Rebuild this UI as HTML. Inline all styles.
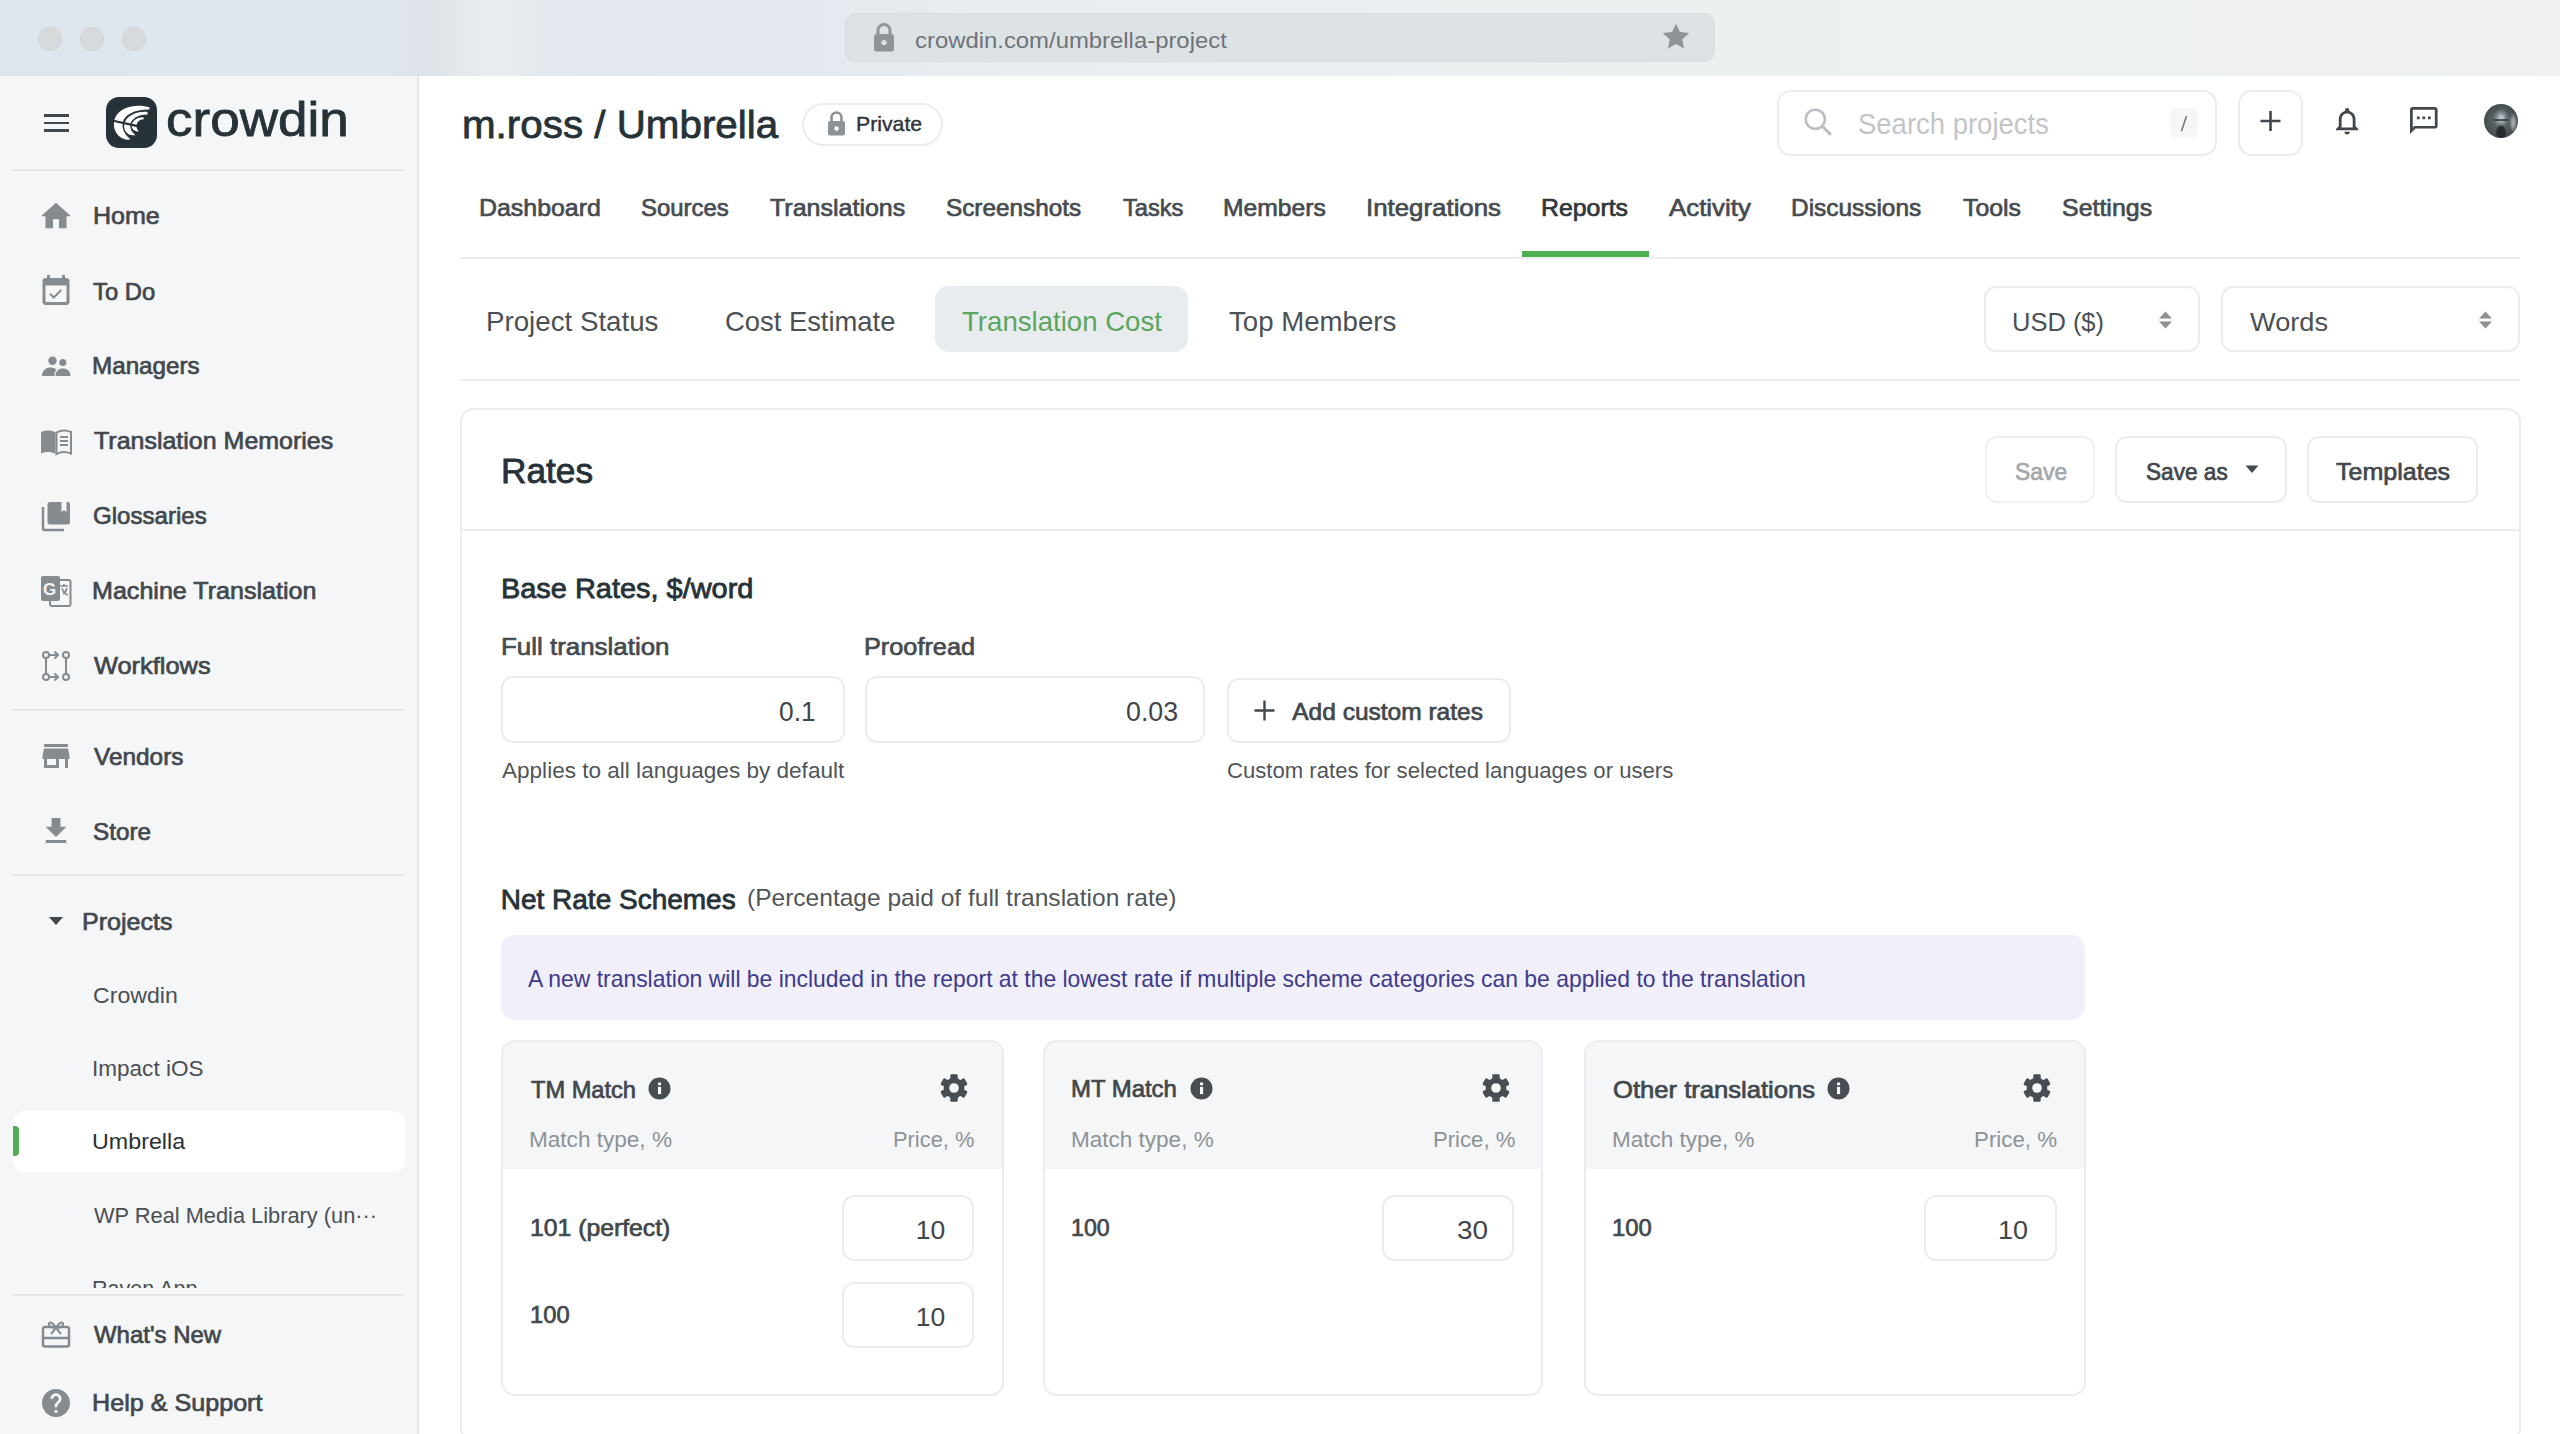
<!DOCTYPE html>
<html><head><meta charset="utf-8">
<style>
html,body{margin:0;padding:0;width:2560px;height:1434px;overflow:hidden;background:#fff;font-family:"Liberation Sans",sans-serif;}
.a{position:absolute;box-sizing:border-box;}
.t{position:absolute;line-height:1;white-space:nowrap;transform-origin:0 0;}
svg{position:absolute;overflow:visible;}
.sep{position:absolute;height:2px;background:#eceef0;}
.bx{position:absolute;box-sizing:border-box;border:2px solid #eaecee;background:#fff;}
</style></head>
<body>
<!-- browser top bar -->
<div class="a" style="left:0;top:0;width:2560px;height:76px;background:linear-gradient(90deg,#dfe5ec 0px,#e1e7ee 380px,#dde3e8 425px,#e9edef 490px,#e2e8ee 560px,#e3e9ef 800px,#e9edf0 1000px,#edf0f1 1600px,#eff1f2 2560px);"></div>
<div class="a" style="left:38px;top:27px;width:24px;height:24px;border-radius:50%;background:#d7dadd;border:1px solid #cfd3d7;"></div>
<div class="a" style="left:80px;top:27px;width:24px;height:24px;border-radius:50%;background:#d7dadd;border:1px solid #cfd3d7;"></div>
<div class="a" style="left:122px;top:27px;width:24px;height:24px;border-radius:50%;background:#d7dadd;border:1px solid #cfd3d7;"></div>
<div class="a" style="left:846px;top:14px;width:868px;height:47px;border-radius:10px;background:#dde2e5;box-shadow:0 0 0 1px #d9dee2;"></div>
<!-- url lock -->
<svg style="left:873px;top:23px" width="22" height="29" viewBox="0 0 22 29"><path d="M5 11V7.5a6 6 0 0 1 12 0V11" fill="none" stroke="#8f9499" stroke-width="3"/><rect x="1" y="11" width="20" height="17.5" rx="2.5" fill="#8f9499"/><circle cx="11" cy="19.5" r="2.6" fill="#dce1e5"/></svg>
<!-- star -->
<svg style="left:1662px;top:23px" width="28" height="27" viewBox="0 0 24 23"><path d="M12 0.5l3.4 7.2 7.9 0.9-5.9 5.4 1.6 7.8L12 17.9l-7 3.9 1.6-7.8L0.7 8.6l7.9-0.9z" fill="#8f9499"/></svg>

<!-- sidebar -->
<div class="a" style="left:0;top:76px;width:419px;height:1358px;background:#f4f6f8;border-right:2px solid #e5e7e9;"></div>
<!-- hamburger -->
<div class="a" style="left:44px;top:114px;width:25px;height:2.5px;background:#42474c;"></div>
<div class="a" style="left:44px;top:121.5px;width:25px;height:2.5px;background:#42474c;"></div>
<div class="a" style="left:44px;top:129px;width:25px;height:2.5px;background:#42474c;"></div>
<!-- logo -->
<div class="a" style="left:106px;top:97px;width:51px;height:51px;border-radius:13px;background:#263238;"></div>
<svg style="left:106px;top:97px" width="51" height="51" viewBox="0 0 51 51">
 <path d="M43.5 10.3 C31 6.5 15 9.5 9.5 20 C5.5 28 9 39 18 42 C20 42.8 22.5 43 24.5 42.3 C19 38 15.5 32 16.8 25.5 C18.5 18 28 12.5 43.5 12.6Z" fill="#fff"/>
 <path d="M41.5 15 C31 14 21.5 18.5 18.8 25.5 C16.5 32 20.5 39.5 29.5 38.2 C25 34.5 23.3 30 24.8 25.8 C26.8 20.5 33.5 17.3 41.5 17.4Z" fill="#fff"/>
 <path d="M37.6 20.3 C31.5 20 26.8 23.5 25.8 27.8 C25 31.5 28 34.5 32.8 34.6 C30.5 32 30 29 31 26.5 C32.3 23.5 35 22.2 37.6 22.2Z" fill="#fff"/>
 <path d="M6 23.5 L34 29.6" stroke="#263238" stroke-width="2.2"/>
</svg>
<div class="sep" style="left:12px;top:169px;width:392px;background:#e4e7ea;"></div>
<div class="sep" style="left:12px;top:709px;width:392px;background:#e4e7ea;"></div>
<div class="sep" style="left:12px;top:874px;width:392px;background:#e4e7ea;"></div>
<div class="sep" style="left:12px;top:1294px;width:392px;background:#e4e7ea;"></div>
<!-- sidebar icons -->
<svg style="left:41px;top:202px" width="30" height="27" viewBox="2 3 20 17"><path d="M10 20v-6h4v6h5v-8h3L12 3 2 12h3v8z" fill="#868b90"/></svg>
<svg style="left:42px;top:275px" width="28" height="30" viewBox="3 1 18 20"><path d="M19 3h-1V1h-2v2H8V1H6v2H5c-1.11 0-2 .9-2 2v14c0 1.1.89 2 2 2h14c1.1 0 2-.9 2-2V5c0-1.1-.9-2-2-2zm0 16H5V8h14v11z" fill="#868b90"/><path d="M8 13.5l2.5 2.5 5-5" fill="none" stroke="#868b90" stroke-width="1.3"/></svg>
<svg style="left:41px;top:355px" width="30" height="22" viewBox="0 0 30 22"><circle cx="11.5" cy="5.8" r="4.2" fill="#868b90"/><circle cx="21.8" cy="7.5" r="3.5" fill="#868b90"/><path d="M1 21 C1 15 5.5 12.5 9.5 12.5 C12.5 12.5 14.5 13.5 15.5 14.5 C14 16 13.5 18.5 13.5 21Z" fill="#868b90"/><path d="M14.5 21 C14.5 16 17.5 13.5 21.8 13.5 C26 13.5 29.5 16 29.5 21Z" fill="#868b90"/></svg>
<svg style="left:40px;top:429px" width="32" height="26" viewBox="0 0 32 26"><path d="M1 3 C6 1 11 1 15.5 3.5 V25 C11 22.5 6 22.5 1 24.5Z" fill="#868b90"/><path d="M16.5 3.5 C21 1 26 1 31 3 V24.5 C26 22.5 21 22.5 16.5 25Z" fill="none" stroke="#868b90" stroke-width="2"/><path d="M20 8h8M20 12h8M20 16h8" stroke="#868b90" stroke-width="1.8"/></svg>
<svg style="left:41px;top:501px" width="30" height="30" viewBox="0 0 30 30"><path d="M2 6v21.5a1.5 1.5 0 0 0 1.5 1.5H23" fill="none" stroke="#868b90" stroke-width="2.5"/><rect x="6.5" y="1" width="22.5" height="22.5" rx="2.5" fill="#868b90"/><path d="M20.5 1v10l2.5-2 2.5 2V1z" fill="#f4f6f8"/></svg>
<svg style="left:40px;top:575px" width="32" height="32" viewBox="0 0 32 32"><rect x="10" y="5" width="20.5" height="26" rx="2" fill="#f4f6f8" stroke="#868b90" stroke-width="2"/><rect x="1" y="1" width="19" height="25" rx="2" fill="#868b90"/><text x="3" y="20" font-family="Liberation Sans" font-weight="bold" font-size="17" fill="#f4f6f8">G</text><path d="M20 11h8M24 9v2M22 13c1 4 3 6 6 7M27 13c-1 3-2 5-4 6" stroke="#868b90" stroke-width="1.6" fill="none"/></svg>
<svg style="left:41px;top:650px" width="30" height="32" viewBox="0 0 30 32"><circle cx="5" cy="5" r="3" fill="none" stroke="#868b90" stroke-width="2"/><circle cx="25" cy="5" r="3" fill="none" stroke="#868b90" stroke-width="2"/><circle cx="5" cy="27" r="3" fill="none" stroke="#868b90" stroke-width="2"/><circle cx="25" cy="27" r="3" fill="none" stroke="#868b90" stroke-width="2"/><path d="M5 8v16M25 8v16M8 5h9M8 27h9" stroke="#868b90" stroke-width="2"/><path d="M13.5 1.5l3.5 3.5-3.5 3.5M13.5 23.5l3.5 3.5-3.5 3.5" fill="none" stroke="#868b90" stroke-width="2"/></svg>
<svg style="left:42px;top:744px" width="28" height="24" viewBox="3 4 18 16"><path d="M20 4H4v2h16V4zm1 10v-2l-1-5H4l-1 5v2h1v6h10v-6h4v6h2v-6h1zm-9 4H6v-4h6v4z" fill="#868b90"/></svg>
<svg style="left:45px;top:818px" width="22" height="25" viewBox="5 3 14 17"><path d="M19 9h-4V3H9v6H5l7 7 7-7zM5 18v2h14v-2H5z" fill="#868b90"/></svg>
<!-- projects caret -->
<svg style="left:49px;top:917px" width="14" height="9" viewBox="0 0 14 9"><path d="M0 0h14L7 8z" fill="#42474c"/></svg>
<!-- umbrella highlight -->
<div class="a" style="left:13px;top:1111px;width:392px;height:61px;border-radius:12px;background:#fff;"></div>
<div class="a" style="left:13px;top:1126px;width:6px;height:30px;border-radius:0 4px 4px 0;background:#52ab56;"></div>
<!-- raven clipped -->
<div class="a" style="left:0;top:1250px;width:418px;height:38px;overflow:hidden;"><div style="position:absolute;left:0;top:-1250px;width:418px;height:1434px;"><div class="t" style="left:92.31px;top:1277.20px;font-size:22.8px;color:#4a4f54;transform:scaleX(0.9464);">Raven App</div></div></div>
<svg style="left:41px;top:1320px" width="30" height="28" viewBox="0 0 30 28"><rect x="2" y="7" width="26" height="19.5" rx="2" fill="none" stroke="#868b90" stroke-width="2.5"/><path d="M2 18h26" stroke="#868b90" stroke-width="2.5"/><path d="M15 8 C12 2 7 1 8 5 C9 7 12 8 15 8 C18 8 21 7 22 5 C23 1 18 2 15 8 L10 14 M15 8 L20 14" fill="none" stroke="#868b90" stroke-width="2"/></svg>
<svg style="left:42px;top:1389px" width="28" height="28" viewBox="2 2 20 20"><path d="M12 2C6.48 2 2 6.48 2 12s4.48 10 10 10 10-4.48 10-10S17.52 2 12 2zm1 17h-2v-2h2v2zm2.07-7.75l-.9.92C13.45 12.9 13 13.5 13 15h-2v-.5c0-1.1.45-2.1 1.17-2.83l1.24-1.26c.37-.36.59-.86.59-1.41 0-1.1-.9-2-2-2s-2 .9-2 2H8c0-2.21 1.79-4 4-4s4 1.79 4 4c0 .88-.36 1.68-.93 2.25z" fill="#868b90"/></svg>

<!-- header -->
<div class="a" style="left:802px;top:103px;width:141px;height:43px;border-radius:22px;border:2px solid #eaeced;"></div>
<svg style="left:827px;top:111px" width="19" height="25" viewBox="0 0 19 25"><path d="M4.5 10V6.5a5 5 0 0 1 10 0V10" fill="none" stroke="#8d9297" stroke-width="2.6"/><rect x="1" y="10" width="17" height="14.5" rx="2" fill="#8d9297"/><circle cx="9.5" cy="17.5" r="2.2" fill="#fff"/></svg>
<!-- search -->
<div class="a" style="left:1777px;top:90px;width:440px;height:66px;border-radius:14px;border:2px solid #eaeced;"></div>
<svg style="left:1804px;top:108px" width="28" height="28" viewBox="0 0 28 28"><circle cx="11.3" cy="11.3" r="9.6" fill="none" stroke="#bbbfc2" stroke-width="2.6"/><path d="M18.3 18.3L26.8 26.8" stroke="#bbbfc2" stroke-width="3"/></svg>
<div class="a" style="left:2170px;top:108px;width:28px;height:30px;border-radius:6px;background:#f5f6f7;"></div>
<svg style="left:2180px;top:115px" width="8" height="17" viewBox="0 0 8 17"><path d="M6.5 1L1.5 16" stroke="#6b7075" stroke-width="1.5"/></svg>
<div class="a" style="left:2238px;top:90px;width:65px;height:66px;border-radius:14px;border:2px solid #eaeced;"></div>
<svg style="left:2260px;top:111px" width="21" height="20" viewBox="0 0 21 20"><path d="M10.5 0v20M0.5 10h20" stroke="#42474c" stroke-width="2.6"/></svg>
<svg style="left:2336px;top:108px" width="22.3" height="26.4" viewBox="4 2.5 16 19.5" preserveAspectRatio="none"><path d="M12 22c1.1 0 2-.9 2-2h-4c0 1.1.9 2 2 2zm6-6v-5c0-3.07-1.63-5.64-4.5-6.32V4c0-.83-.67-1.5-1.5-1.5s-1.5.67-1.5 1.5v.68C7.64 5.36 6 7.92 6 11v5l-2 2v1h16v-1l-2-2zm-2 1H8v-6c0-2.48 1.51-4.5 4-4.5s4 2.02 4 4.5v6z" fill="#42474c"/></svg>
<svg style="left:2410px;top:107px" width="27.6" height="27" viewBox="2 2 20 20" preserveAspectRatio="none"><path d="M20 2H4c-1.1 0-1.99.9-1.99 2L2 22l4-4h14c1.1 0 2-.9 2-2V4c0-1.1-.9-2-2-2zm0 14H5.17L4 17.17V4h16v12zM7 9h2v2H7zm4 0h2v2h-2zm4 0h2v2h-2z" fill="#42474c"/></svg>
<div class="a" style="left:2484px;top:104px;width:34px;height:34px;border-radius:50%;overflow:hidden;background:radial-gradient(ellipse 6px 9px at 50% 85%,#242a2d 60%,rgba(36,42,45,0) 100%),radial-gradient(ellipse 8px 10px at 50% 42%,#c3cace 15%,rgba(140,148,154,.7) 60%,rgba(90,98,103,0) 100%),radial-gradient(ellipse 4px 10px at 86% 55%,#9ea5a9 30%,rgba(158,165,169,0) 100%),radial-gradient(circle at 50% 50%,#6a7175 0%,#4b5255 60%,#33393c 100%);">
<div style="position:absolute;left:10px;top:15px;width:14px;height:2px;background:#2c3134;opacity:.8;"></div>
</div>

<!-- nav line + underline -->
<div class="sep" style="left:460px;top:257px;width:2060px;"></div>
<div class="a" style="left:1522px;top:251px;width:127px;height:6px;background:#4caf50;"></div>
<div class="a" style="left:935px;top:286px;width:253px;height:66px;border-radius:14px;background:#e9ecee;"></div>
<div class="sep" style="left:460px;top:379px;width:2060px;"></div>
<!-- selects -->
<div class="bx" style="left:1984px;top:286px;width:216px;height:66px;border-radius:12px;"></div>
<svg style="left:2158px;top:311px" width="15" height="18" viewBox="0 0 15 18"><path d="M1 7.5h13L7.5 0.5zM1 10.5h13L7.5 17.5z" fill="#8a8f93"/></svg>
<div class="bx" style="left:2221px;top:286px;width:299px;height:66px;border-radius:12px;"></div>
<svg style="left:2478px;top:311px" width="15" height="18" viewBox="0 0 15 18"><path d="M1 7.5h13L7.5 0.5zM1 10.5h13L7.5 17.5z" fill="#8a8f93"/></svg>

<!-- rates card -->
<div class="bx" style="left:460px;top:408px;width:2061px;height:1034px;border-radius:14px;"></div>
<div class="sep" style="left:461px;top:529px;width:2058px;"></div>
<div class="bx" style="left:1985px;top:436px;width:110px;height:67px;border-radius:12px;border-color:#eef0f1;"></div>
<div class="bx" style="left:2115px;top:436px;width:172px;height:67px;border-radius:12px;"></div>
<svg style="left:2245px;top:465px" width="14" height="9" viewBox="0 0 14 9"><path d="M0.5 0.5h13L7 8z" fill="#42474c"/></svg>
<div class="bx" style="left:2307px;top:436px;width:171px;height:67px;border-radius:12px;"></div>
<!-- inputs -->
<div class="bx" style="left:501px;top:676px;width:344px;height:67px;border-radius:12px;"></div>
<div class="bx" style="left:865px;top:676px;width:340px;height:67px;border-radius:12px;"></div>
<div class="bx" style="left:1227px;top:678px;width:284px;height:65px;border-radius:12px;"></div>
<svg style="left:1254px;top:700px" width="21" height="21" viewBox="0 0 21 21"><path d="M10.5 0.5v20M0.5 10.5h20" stroke="#42474c" stroke-width="2.4"/></svg>
<!-- alert -->
<div class="a" style="left:501px;top:935px;width:1584px;height:85px;border-radius:14px;background:#f0effa;"></div>
<!-- scheme cards -->
<div class="bx" style="left:501px;top:1040px;width:503px;height:356px;border-radius:14px;overflow:hidden;"><div style="position:absolute;left:0;top:0;right:0;height:127px;background:#f4f6f7;"></div></div>
<div class="bx" style="left:1043px;top:1040px;width:500px;height:356px;border-radius:14px;overflow:hidden;"><div style="position:absolute;left:0;top:0;right:0;height:127px;background:#f4f6f7;"></div></div>
<div class="bx" style="left:1584px;top:1040px;width:502px;height:356px;border-radius:14px;overflow:hidden;"><div style="position:absolute;left:0;top:0;right:0;height:127px;background:#f4f6f7;"></div></div>
<!-- info icons -->
<svg style="left:648px;top:1077px" width="23" height="23" viewBox="0 0 23 23"><circle cx="11.5" cy="11.5" r="11" fill="#474d52"/><rect x="10" y="9.8" width="3.1" height="7.3" fill="#fff"/><rect x="10" y="5.6" width="3.1" height="2.6" rx="0.6" fill="#fff"/></svg>
<svg style="left:1190px;top:1077px" width="23" height="23" viewBox="0 0 23 23"><circle cx="11.5" cy="11.5" r="11" fill="#474d52"/><rect x="10" y="9.8" width="3.1" height="7.3" fill="#fff"/><rect x="10" y="5.6" width="3.1" height="2.6" rx="0.6" fill="#fff"/></svg>
<svg style="left:1827px;top:1077px" width="23" height="23" viewBox="0 0 23 23"><circle cx="11.5" cy="11.5" r="11" fill="#474d52"/><rect x="10" y="9.8" width="3.1" height="7.3" fill="#fff"/><rect x="10" y="5.6" width="3.1" height="2.6" rx="0.6" fill="#fff"/></svg>
<!-- gears -->
<svg style="left:940px;top:1074px" width="28" height="28" viewBox="0 0 28 28"><g fill="#474d52"><circle cx="14" cy="14" r="10.3"/><g id="tp"><rect x="10.3" y="0.2" width="7.4" height="8" rx="1.3"/><rect x="10.3" y="19.8" width="7.4" height="8" rx="1.3"/></g><g transform="rotate(60 14 14)"><rect x="10.3" y="0.2" width="7.4" height="8" rx="1.3"/><rect x="10.3" y="19.8" width="7.4" height="8" rx="1.3"/></g><g transform="rotate(120 14 14)"><rect x="10.3" y="0.2" width="7.4" height="8" rx="1.3"/><rect x="10.3" y="19.8" width="7.4" height="8" rx="1.3"/></g></g><circle cx="14" cy="14" r="4.8" fill="#f4f6f7"/></svg>
<svg style="left:1482px;top:1074px" width="28" height="28" viewBox="0 0 28 28"><g fill="#474d52"><circle cx="14" cy="14" r="10.3"/><g id="tp"><rect x="10.3" y="0.2" width="7.4" height="8" rx="1.3"/><rect x="10.3" y="19.8" width="7.4" height="8" rx="1.3"/></g><g transform="rotate(60 14 14)"><rect x="10.3" y="0.2" width="7.4" height="8" rx="1.3"/><rect x="10.3" y="19.8" width="7.4" height="8" rx="1.3"/></g><g transform="rotate(120 14 14)"><rect x="10.3" y="0.2" width="7.4" height="8" rx="1.3"/><rect x="10.3" y="19.8" width="7.4" height="8" rx="1.3"/></g></g><circle cx="14" cy="14" r="4.8" fill="#f4f6f7"/></svg>
<svg style="left:2023px;top:1074px" width="28" height="28" viewBox="0 0 28 28"><g fill="#474d52"><circle cx="14" cy="14" r="10.3"/><g id="tp"><rect x="10.3" y="0.2" width="7.4" height="8" rx="1.3"/><rect x="10.3" y="19.8" width="7.4" height="8" rx="1.3"/></g><g transform="rotate(60 14 14)"><rect x="10.3" y="0.2" width="7.4" height="8" rx="1.3"/><rect x="10.3" y="19.8" width="7.4" height="8" rx="1.3"/></g><g transform="rotate(120 14 14)"><rect x="10.3" y="0.2" width="7.4" height="8" rx="1.3"/><rect x="10.3" y="19.8" width="7.4" height="8" rx="1.3"/></g></g><circle cx="14" cy="14" r="4.8" fill="#f4f6f7"/></svg>
<!-- scheme inputs -->
<div class="bx" style="left:842px;top:1195px;width:132px;height:66px;border-radius:12px;"></div>
<div class="bx" style="left:842px;top:1282px;width:132px;height:66px;border-radius:12px;"></div>
<div class="bx" style="left:1382px;top:1195px;width:132px;height:66px;border-radius:12px;"></div>
<div class="bx" style="left:1924px;top:1195px;width:133px;height:66px;border-radius:12px;"></div>

<div class="t" style="left:92.79px;top:204.40px;font-size:24.5px;color:#42474c;-webkit-text-stroke:0.7px #42474c;transform:scaleX(1.0217);">Home</div>
<div class="t" style="left:93.08px;top:279.50px;font-size:24.5px;color:#42474c;-webkit-text-stroke:0.7px #42474c;transform:scaleX(0.9708);">To Do</div>
<div class="t" style="left:92.46px;top:354.40px;font-size:24.5px;color:#42474c;-webkit-text-stroke:0.7px #42474c;transform:scaleX(0.9886);">Managers</div>
<div class="t" style="left:93.71px;top:429.40px;font-size:24.5px;color:#42474c;-webkit-text-stroke:0.7px #42474c;transform:scaleX(1.0195);">Translation Memories</div>
<div class="t" style="left:92.97px;top:504.00px;font-size:24.5px;color:#42474c;-webkit-text-stroke:0.7px #42474c;transform:scaleX(0.9823);">Glossaries</div>
<div class="t" style="left:92.39px;top:579.40px;font-size:24.5px;color:#42474c;-webkit-text-stroke:0.7px #42474c;transform:scaleX(1.0238);">Machine Translation</div>
<div class="t" style="left:93.85px;top:654.00px;font-size:24.5px;color:#42474c;-webkit-text-stroke:0.7px #42474c;transform:scaleX(1.0361);">Workflows</div>
<div class="t" style="left:93.55px;top:745.00px;font-size:24.5px;color:#42474c;-webkit-text-stroke:0.7px #42474c;transform:scaleX(0.9951);">Vendors</div>
<div class="t" style="left:93.19px;top:819.70px;font-size:24.5px;color:#42474c;-webkit-text-stroke:0.7px #42474c;transform:scaleX(0.9912);">Store</div>
<div class="t" style="left:82.19px;top:909.50px;font-size:24.5px;color:#42474c;-webkit-text-stroke:0.7px #42474c;transform:scaleX(1.0231);">Projects</div>
<div class="t" style="left:93.95px;top:1322.90px;font-size:24.5px;color:#42474c;-webkit-text-stroke:0.7px #42474c;transform:scaleX(0.9783);">What's New</div>
<div class="t" style="left:91.99px;top:1391.40px;font-size:24.5px;color:#42474c;-webkit-text-stroke:0.7px #42474c;transform:scaleX(1.0260);">Help &amp; Support</div>
<div class="t" style="left:92.52px;top:984.00px;font-size:22.8px;color:#4a4f54;transform:scaleX(1.0138);">Crowdin</div>
<div class="t" style="left:91.84px;top:1056.80px;font-size:22.8px;color:#4a4f54;transform:scaleX(0.9889);">Impact iOS</div>
<div class="t" style="left:92.15px;top:1130.20px;font-size:22.8px;color:#2b3034;transform:scaleX(1.0207);">Umbrella</div>
<div class="t" style="left:93.60px;top:1203.60px;font-size:22.8px;color:#4a4f54;transform:scaleX(0.9562);">WP Real Media Library (un···</div>
<div class="t" style="left:462.28px;top:104.70px;font-size:39.7px;color:#263238;-webkit-text-stroke:0.8px #263238;transform:scaleX(1.0168);">m.ross / Umbrella</div>
<div class="t" style="left:855.94px;top:113.60px;font-size:20.6px;color:#30353a;-webkit-text-stroke:0.4px #30353a;transform:scaleX(1.0313);">Private</div>
<div class="t" style="left:915.45px;top:28.60px;font-size:22.7px;color:#6f7479;transform:scaleX(1.0523);">crowdin.com/umbrella-project</div>
<div class="t" style="left:166.44px;top:96.00px;font-size:48px;color:#263238;-webkit-text-stroke:0.8px #263238;transform:scaleX(1.1042);">crowdin</div>
<div class="t" style="left:479.40px;top:195.70px;font-size:24.5px;color:#464b50;-webkit-text-stroke:0.7px #464b50;transform:scaleX(1.0166);">Dashboard</div>
<div class="t" style="left:641.20px;top:195.70px;font-size:24.5px;color:#464b50;-webkit-text-stroke:0.7px #464b50;transform:scaleX(0.9768);">Sources</div>
<div class="t" style="left:770.46px;top:195.70px;font-size:24.5px;color:#464b50;-webkit-text-stroke:0.7px #464b50;transform:scaleX(1.0206);">Translations</div>
<div class="t" style="left:946.49px;top:195.70px;font-size:24.5px;color:#464b50;-webkit-text-stroke:0.7px #464b50;transform:scaleX(0.9922);">Screenshots</div>
<div class="t" style="left:1122.58px;top:195.70px;font-size:24.5px;color:#464b50;-webkit-text-stroke:0.7px #464b50;transform:scaleX(0.9646);">Tasks</div>
<div class="t" style="left:1223.22px;top:195.70px;font-size:24.5px;color:#464b50;-webkit-text-stroke:0.7px #464b50;transform:scaleX(1.0068);">Members</div>
<div class="t" style="left:1366.13px;top:195.70px;font-size:24.5px;color:#464b50;-webkit-text-stroke:0.7px #464b50;transform:scaleX(1.0547);">Integrations</div>
<div class="t" style="left:1540.91px;top:195.70px;font-size:24.5px;color:#30353a;-webkit-text-stroke:0.7px #30353a;transform:scaleX(1.0144);">Reports</div>
<div class="t" style="left:1669.10px;top:195.70px;font-size:24.5px;color:#464b50;-webkit-text-stroke:0.7px #464b50;transform:scaleX(1.0542);">Activity</div>
<div class="t" style="left:1791.44px;top:195.70px;font-size:24.5px;color:#464b50;-webkit-text-stroke:0.7px #464b50;transform:scaleX(0.9963);">Discussions</div>
<div class="t" style="left:1962.96px;top:195.70px;font-size:24.5px;color:#464b50;-webkit-text-stroke:0.7px #464b50;transform:scaleX(1.0135);">Tools</div>
<div class="t" style="left:2061.57px;top:195.70px;font-size:24.5px;color:#464b50;-webkit-text-stroke:0.7px #464b50;transform:scaleX(1.0179);">Settings</div>
<div class="t" style="left:486.14px;top:308.20px;font-size:28px;color:#4b5055;transform:scaleX(0.9893);">Project Status</div>
<div class="t" style="left:724.72px;top:308.20px;font-size:28px;color:#4b5055;transform:scaleX(0.9777);">Cost Estimate</div>
<div class="t" style="left:962.17px;top:308.20px;font-size:28px;color:#5ba65f;transform:scaleX(0.9858);">Translation Cost</div>
<div class="t" style="left:1229.17px;top:308.20px;font-size:28px;color:#4b5055;transform:scaleX(0.9863);">Top Members</div>
<div class="t" style="left:1857.54px;top:110.40px;font-size:28.8px;color:#c2c5c8;transform:scaleX(0.9541);">Search projects</div>
<div class="t" style="left:2011.81px;top:308.70px;font-size:26.5px;color:#4b5055;transform:scaleX(0.9615);">USD ($)</div>
<div class="t" style="left:2249.50px;top:308.70px;font-size:26.5px;color:#4b5055;transform:scaleX(1.0258);">Words</div>
<div class="t" style="left:500.65px;top:452.90px;font-size:35px;color:#263238;-webkit-text-stroke:0.8px #263238;transform:scaleX(1.0068);">Rates</div>
<div class="t" style="left:2015.23px;top:459.70px;font-size:24.3px;color:#a3a7aa;-webkit-text-stroke:0.7px #a3a7aa;transform:scaleX(0.9433);">Save</div>
<div class="t" style="left:2145.64px;top:459.70px;font-size:24.3px;color:#42474c;-webkit-text-stroke:0.7px #42474c;transform:scaleX(0.9306);">Save as</div>
<div class="t" style="left:2336.26px;top:459.70px;font-size:24.3px;color:#42474c;-webkit-text-stroke:0.7px #42474c;transform:scaleX(1.0300);">Templates</div>
<div class="t" style="left:501.14px;top:575.00px;font-size:28px;color:#263238;-webkit-text-stroke:0.8px #263238;transform:scaleX(1.0329);">Base Rates, $/word</div>
<div class="t" style="left:501.02px;top:634.70px;font-size:24.7px;color:#454a4f;-webkit-text-stroke:0.7px #454a4f;transform:scaleX(1.0495);">Full translation</div>
<div class="t" style="left:864.27px;top:634.70px;font-size:24.7px;color:#454a4f;-webkit-text-stroke:0.7px #454a4f;transform:scaleX(1.0242);">Proofread</div>
<div class="t" style="left:778.98px;top:698.20px;font-size:27.2px;color:#41464b;transform:scaleX(0.9677);">0.1</div>
<div class="t" style="left:1125.96px;top:698.20px;font-size:27.2px;color:#41464b;transform:scaleX(0.9846);">0.03</div>
<div class="t" style="left:1292.25px;top:699.70px;font-size:24.5px;color:#42474c;-webkit-text-stroke:0.7px #42474c;">Add custom rates</div>
<div class="t" style="left:501.60px;top:758.80px;font-size:22.7px;color:#50555a;transform:scaleX(0.9939);">Applies to all languages by default</div>
<div class="t" style="left:1226.71px;top:758.80px;font-size:22.7px;color:#50555a;transform:scaleX(0.9748);">Custom rates for selected languages or users</div>
<div class="t" style="left:500.71px;top:885.50px;font-size:28px;color:#263238;-webkit-text-stroke:0.8px #263238;">Net Rate Schemes</div>
<div class="t" style="left:746.75px;top:886.20px;font-size:24px;color:#50555a;transform:scaleX(1.0221);">(Percentage paid of full translation rate)</div>
<div class="t" style="left:528.00px;top:967.50px;font-size:23.6px;color:#3d3a8c;transform:scaleX(0.9703);">A new translation will be included in the report at the lowest rate if multiple scheme categories can be applied to the translation</div>
<div class="t" style="left:530.78px;top:1078.40px;font-size:24px;color:#42474c;-webkit-text-stroke:0.7px #42474c;transform:scaleX(0.9842);">TM Match</div>
<div class="t" style="left:1070.98px;top:1077.40px;font-size:24px;color:#42474c;-webkit-text-stroke:0.7px #42474c;transform:scaleX(0.9966);">MT Match</div>
<div class="t" style="left:1612.65px;top:1078.00px;font-size:24px;color:#42474c;-webkit-text-stroke:0.7px #42474c;transform:scaleX(1.0669);">Other translations</div>
<div class="t" style="left:529.04px;top:1128.70px;font-size:22.4px;color:#8d9297;transform:scaleX(1.0078);">Match type, %</div>
<div class="t" style="left:1070.74px;top:1128.70px;font-size:22.4px;color:#8d9297;transform:scaleX(1.0057);">Match type, %</div>
<div class="t" style="left:1611.74px;top:1128.70px;font-size:22.4px;color:#8d9297;transform:scaleX(1.0050);">Match type, %</div>
<div class="t" style="left:892.59px;top:1128.70px;font-size:22.4px;color:#8d9297;transform:scaleX(0.9768);">Price, %</div>
<div class="t" style="left:1433.27px;top:1128.70px;font-size:22.4px;color:#8d9297;transform:scaleX(0.9879);">Price, %</div>
<div class="t" style="left:1973.96px;top:1128.70px;font-size:22.4px;color:#8d9297;transform:scaleX(0.9965);">Price, %</div>
<div class="t" style="left:529.60px;top:1216.40px;font-size:24px;color:#42474c;-webkit-text-stroke:0.7px #42474c;transform:scaleX(1.0313);">101 (perfect)</div>
<div class="t" style="left:529.67px;top:1302.90px;font-size:24px;color:#42474c;-webkit-text-stroke:0.7px #42474c;transform:scaleX(0.9883);">100</div>
<div class="t" style="left:1071.40px;top:1216.10px;font-size:24px;color:#42474c;-webkit-text-stroke:0.7px #42474c;transform:scaleX(0.9672);">100</div>
<div class="t" style="left:1612.36px;top:1216.00px;font-size:24px;color:#42474c;-webkit-text-stroke:0.7px #42474c;transform:scaleX(0.9935);">100</div>
<div class="t" style="left:915.74px;top:1217.40px;font-size:26.5px;color:#41464b;">10</div>
<div class="t" style="left:915.74px;top:1304.40px;font-size:26.5px;color:#41464b;">10</div>
<div class="t" style="left:1456.63px;top:1217.40px;font-size:26.5px;color:#41464b;transform:scaleX(1.0540);">30</div>
<div class="t" style="left:1998.12px;top:1217.40px;font-size:26.5px;color:#41464b;transform:scaleX(1.0162);">10</div>
</body></html>
